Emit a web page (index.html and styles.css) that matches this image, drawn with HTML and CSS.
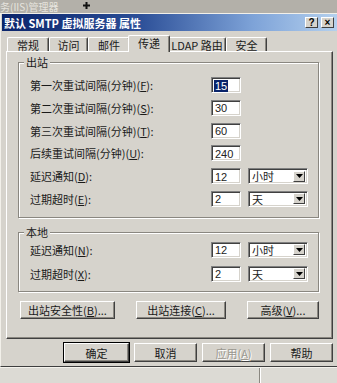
FILE: index.html
```html
<!DOCTYPE html>
<html>
<head>
<meta charset="utf-8">
<link rel="stylesheet" href="styles.css">
</head>
<body>
<div class="screen">
  <div class="topstrip">
    <span class="bgtitle">务(IIS)管理器</span>
    <svg class="cursor" width="7" height="7" viewBox="0 0 7 7"><path d="M3.5 0v7M0 3.5h7" stroke="#111" stroke-width="2"/></svg>
  </div>
  <div class="dialog">
    <div class="titlebar">
      <span class="title">默认 SMTP 虚拟服务器 属性</span>
      <div class="tbtns">
        <span class="tbtn">?</span>
        <span class="tbtn">×</span>
      </div>
    </div>
    <div class="content">
      <div class="tabs">
        <span class="tab w42">常规</span>
        <span class="tab w39">访问</span>
        <span class="tab w42">邮件</span>
        <span class="tab sel">传递</span>
        <span class="tab w58">LDAP 路由</span>
        <span class="tab w41">安全</span>
      </div>
      <div class="panel">
        <div class="group out">
          <span class="legend">出站</span>
          <div class="rows">
            <span class="lbl">第一次重试间隔(分钟)(<u>F</u>):</span>
            <span class="input"><span class="hl">15</span></span>
            <span></span>
            <span class="lbl">第二次重试间隔(分钟)(<u>S</u>):</span>
            <span class="input">30</span>
            <span></span>
            <span class="lbl">第三次重试间隔(分钟)(<u>T</u>):</span>
            <span class="input">60</span>
            <span></span>
            <span class="lbl">后续重试间隔(分钟)(<u>U</u>):</span>
            <span class="input">240</span>
            <span></span>
            <span class="lbl">延迟通知(<u>D</u>):</span>
            <span class="input">12</span>
            <span class="select"><span class="sv">小时</span><span class="dd"><svg width="7" height="4" viewBox="0 0 7 4"><path d="M0 0h7L3.5 4z" fill="#000"/></svg></span></span>
            <span class="lbl">过期超时(<u>E</u>):</span>
            <span class="input">2</span>
            <span class="select"><span class="sv">天</span><span class="dd"><svg width="7" height="4" viewBox="0 0 7 4"><path d="M0 0h7L3.5 4z" fill="#000"/></svg></span></span>
          </div>
        </div>
        <div class="group local">
          <span class="legend">本地</span>
          <div class="rows">
            <span class="lbl">延迟通知(<u>N</u>):</span>
            <span class="input">12</span>
            <span class="select"><span class="sv">小时</span><span class="dd"><svg width="7" height="4" viewBox="0 0 7 4"><path d="M0 0h7L3.5 4z" fill="#000"/></svg></span></span>
            <span class="lbl">过期超时(<u>X</u>):</span>
            <span class="input">2</span>
            <span class="select"><span class="sv">天</span><span class="dd"><svg width="7" height="4" viewBox="0 0 7 4"><path d="M0 0h7L3.5 4z" fill="#000"/></svg></span></span>
          </div>
        </div>
        <div class="btnrow">
          <span class="btn b1">出站安全性(<u>B</u>)...</span>
          <span class="btn b2">出站连接(<u>C</u>)...</span>
          <span class="btn b3">高级(<u>V</u>)...</span>
        </div>
      </div>
      <div class="footer">
        <span class="btn fb default">确定</span>
        <span class="btn fb">取消</span>
        <span class="btn fb disabled">应用(<u>A</u>)</span>
        <span class="btn fb">帮助</span>
      </div>
    </div>
  </div>
  <div class="status">
    <span class="cell1"></span>
    <span class="cell2"></span>
  </div>
</div>
</body>
</html>
```

FILE: styles.css
```css
* { box-sizing: border-box; }
html, body { margin: 0; padding: 0; }
body {
  width: 337px;
  height: 383px;
  overflow: hidden;
  background: #d6d3cc;
  font-family: "Noto Sans CJK SC", "Liberation Sans", sans-serif;
  font-size: 11px;
  color: #1a1a1a;
}
u { text-decoration: underline; text-underline-offset: 1px; }
.screen { display: flex; flex-direction: column; height: 383px; }

.topstrip {
  height: 13px;
  flex: none;
  background: #b3b0a9;
  color: #e6e4de;
  display: flex;
  align-items: center;
}
.bgtitle { white-space: nowrap; font-size: 10px; line-height: 13px; }
.cursor { margin-left: 24px; margin-top: -3px; }

.dialog {
  flex: none;
  background: #d6d3cc;
  border-top: 1px solid #f2f0ea;
  border-left: 1px solid #f2f0ea;
  border-bottom: 1px solid #3e3e3e;
  padding: 0 0 4px 1px;
}
.titlebar {
  height: 17px;
  background: linear-gradient(to right, #0a246a 0%, #2a4d96 40%, #7ea3d8 75%, #b4d0ee 100%);
  display: flex;
  align-items: center;
  justify-content: space-between;
  padding: 0 3px 0 2px;
}
.title { color: #fff; font-weight: bold; font-size: 11px; white-space: nowrap; }
.tbtns { display: flex; gap: 3px; }
.tbtn {
  width: 13px;
  height: 11px;
  background: #d6d3cc;
  border: 1px solid;
  border-color: #fff #404040 #404040 #fff;
  font-family: "Liberation Sans", sans-serif;
  font-weight: bold;
  font-size: 10px;
  line-height: 9px;
  text-align: center;
  color: #000;
}

.content { padding: 4px 4px 0 4px; }
.tabs {
  height: 16px;
  display: flex;
  align-items: flex-end;
  padding-left: 1px;
  position: relative;
  z-index: 1;
}
.tab {
  height: 14px;
  border-top: 1px solid #fff;
  border-left: 1px solid #fff;
  border-right: 1px solid #404040;
  border-radius: 2px 2px 0 0;
  box-shadow: inset -1px 0 0 #8a8780;
  display: flex;
  align-items: center;
  justify-content: center;
  white-space: nowrap;
  font-size: 11px;
  line-height: 12px;
}
.w42 { width: 42px; }
.w39 { width: 39px; }
.w58 { width: 58px; }
.w41 { width: 41px; }
.tab.sel {
  width: 42px;
  height: 17px;
  margin: 0 -2px -1px -2px;
  background: #d6d3cc;
  position: relative;
  z-index: 2;
  padding-bottom: 2px;
}

.panel {
  height: 288px;
  border: 1px solid;
  border-color: #fff #404040 #404040 #fff;
  box-shadow: inset -1px -1px 0 #8a8780;
  padding: 10px 13px 0 11px;
  display: flex;
  flex-direction: column;
}
.group {
  position: relative;
  border: 1px solid #8a8780;
  box-shadow: 1px 1px 0 #fff, inset 1px 1px 0 #fff;
  padding: 0 10px 0 11px;
}
.group.out { padding-top: 14px; padding-bottom: 10px; }
.group.local { margin-top: 14px; padding-top: 9px; padding-bottom: 9px; }
.legend {
  position: absolute;
  top: -8px;
  left: 5px;
  padding: 0 2px;
  background: #d6d3cc;
  line-height: 14px;
  font-size: 11px;
}
.rows {
  display: grid;
  grid-template-columns: 1fr 30px 60px;
  column-gap: 7px;
  grid-auto-rows: 16px;
  align-items: center;
}
.group.out .rows { row-gap: 6.8px; }
.group.local .rows { row-gap: 8px; }
.lbl { white-space: nowrap; line-height: 14px; }
.input, .select {
  height: 16px;
  background: #fff;
  border: 1px solid;
  border-color: #808080 #fff #fff #808080;
  box-shadow: inset 1px 1px 0 #404040, inset -1px -1px 0 #d6d3cc;
  font-family: "Liberation Sans", sans-serif;
  font-size: 11px;
  line-height: 12px;
  padding: 1px 0 0 3px;
  display: flex;
  align-items: center;
  color: #222;
}
.hl { background: #0a246a; color: #fff; padding: 0 1px; margin-left: -1px; }
.select { justify-content: space-between; padding: 2px 2px 2px 3px; }
.sv { font-family: "Noto Sans CJK SC", sans-serif; font-size: 11px; }
.dd {
  width: 12px;
  height: 11px;
  background: #d6d3cc;
  border: 1px solid;
  border-color: #fff #404040 #404040 #fff;
  display: flex;
  align-items: center;
  justify-content: center;
}

.btn {
  height: 18px;
  background: #d6d3cc;
  border: 1px solid;
  border-color: #fff #404040 #404040 #fff;
  box-shadow: inset -1px -1px 0 #8a8780;
  display: flex;
  align-items: center;
  justify-content: center;
  white-space: nowrap;
  font-size: 11px;
  line-height: 12px;
}
.btnrow {
  margin-top: 9px;
  padding-left: 2px;
  display: flex;
  justify-content: space-between;
}
.b1 { width: 95px; }
.b2 { width: 90px; }
.b3 { width: 72px; }

.footer {
  margin-top: 4px;
  display: flex;
  justify-content: flex-end;
  gap: 5px;
}
.btn.fb { width: 63px; height: 19px; }
.btn.default {
  width: 65px;
  border-color: #fff #404040 #404040 #fff;
  box-shadow: inset -1px -1px 0 #8a8780, 0 0 0 1px #000;
}
.btn.disabled { color: #9a978f; text-shadow: 1px 1px 0 #fff; }

.status {
  flex: 1;
  display: flex;
  background: #dcdad4;
  border-top: 1px solid #f4f2ec;
}
.cell1 { width: 260px; border-right: 1px solid #8a8780; }
.cell2 { flex: 1; border-left: 1px solid #fff; }
```
